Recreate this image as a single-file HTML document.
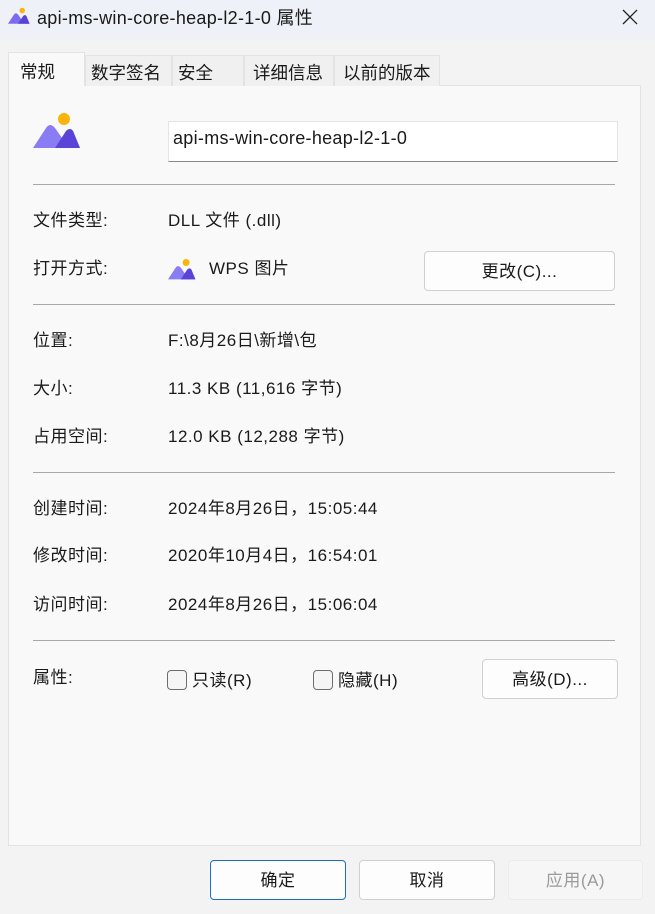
<!DOCTYPE html>
<html><head><meta charset="utf-8"><style>
*{margin:0;padding:0;box-sizing:border-box}
body{width:655px;height:914px;background:#f3f3f3;font-family:"Liberation Sans","Noto Sans CJK SC",sans-serif;font-size:17px;letter-spacing:0.5px;color:#1a1a1a;position:relative;overflow:hidden}
.a{position:absolute;white-space:nowrap;line-height:22px}
.title{position:absolute;left:0;top:0;width:655px;height:40px;background:#eef1f8}
.tab{position:absolute;top:55px;height:31px;background:#f0f0f0;border:1px solid #e3e3e3;border-bottom:none;font-size:17.5px;line-height:34px;padding-left:5px;letter-spacing:0}
.panel{position:absolute;left:8px;top:85px;width:633px;height:761px;background:#f9f9f9;border:1px solid #e3e3e3}
.hr{position:absolute;left:33px;width:582px;height:1px;background:#a8a8a8}
.btn{position:absolute;background:#fdfdfd;border:1px solid #d0d0d0;border-radius:4px;text-align:center;line-height:39px;font-size:17px}
.cb{position:absolute;width:20px;height:20px;border:1px solid #6d6d6d;border-radius:4px;background:#f5f5f5}
</style></head><body>
<div class="title"></div>
<svg class="a" style="left:8px;top:7px" width="22" height="18" viewBox="33 112 48 38"><circle cx="64" cy="119" r="6" fill="#fbb40b"/><path d="M33 148 L46 128 Q50 122 55 128 L62 138 L67 131 Q70 127 73 131 L80 148 Z" fill="#7a6cf0"/><path d="M55 148 L66 131 Q70 127 73 131 L80 148 Z" fill="#5a44d8"/></svg>
<div class="a" style="left:37px;top:7px;font-size:18px;letter-spacing:0.3px">api-ms-win-core-heap-l2-1-0 属性</div>
<svg class="a" style="left:622px;top:9px" width="16" height="16"><path d="M1 1L15 15M15 1L1 15" stroke="#222" stroke-width="1.3"/></svg>
<div class="panel"></div>
<div class="tab" style="left:85px;width:87px">数字签名</div>
<div class="tab" style="left:172px;width:72px">安全</div>
<div class="tab" style="left:244px;width:90px;padding-left:8px">详细信息</div>
<div class="tab" style="left:334px;width:106px;padding-left:8px">以前的版本</div>
<div class="tab" style="left:8px;top:52px;width:77px;height:34px;background:#f9f9f9;padding-left:11px;line-height:38px">常规</div>
<svg class="a" style="left:33px;top:112px" width="48" height="38" viewBox="33 112 48 38"><circle cx="64" cy="119" r="6" fill="#fbb40b"/><path d="M33 148 L46 128 Q50 122 55 128 L62 138 L67 131 Q70 127 73 131 L80 148 Z" fill="#8a7cf2"/><path d="M55 148 L66 131 Q70 127 73 131 L80 148 Z" fill="#5a44d8"/></svg>
<div style="position:absolute;left:168px;top:121px;width:450px;height:41px;background:#fff;border:1px solid #e5e5e5;border-bottom:1px solid #888"></div>
<div class="a" style="left:173px;top:127px;font-size:18px;letter-spacing:0.3px">api-ms-win-core-heap-l2-1-0</div>
<div class="hr" style="top:184px"></div>
<div class="a" style="left:33px;top:210px">文件类型:</div><div class="a" style="left:168px;top:210px">DLL 文件 (.dll)</div>
<div class="a" style="left:33px;top:258px">打开方式:</div>
<svg class="a" style="left:168px;top:258px" width="28" height="23" viewBox="33 112 48 38"><circle cx="64" cy="119" r="6" fill="#fbb40b"/><path d="M33 148 L46 128 Q50 122 55 128 L62 138 L67 131 Q70 127 73 131 L80 148 Z" fill="#8a7cf2"/><path d="M55 148 L66 131 Q70 127 73 131 L80 148 Z" fill="#5a44d8"/></svg>
<div class="a" style="left:209px;top:258px">WPS 图片</div>
<div class="btn" style="left:424px;top:251px;width:191px;height:40px">更改(C)...</div>
<div class="hr" style="top:304px"></div>
<div class="a" style="left:33px;top:330px">位置:</div><div class="a" style="left:168px;top:330px">F:\8月26日\新增\包</div>
<div class="a" style="left:33px;top:378px">大小:</div><div class="a" style="left:168px;top:378px">11.3 KB (11,616 字节)</div>
<div class="a" style="left:33px;top:426px">占用空间:</div><div class="a" style="left:168px;top:426px">12.0 KB (12,288 字节)</div>
<div class="hr" style="top:472px"></div>
<div class="a" style="left:33px;top:498px">创建时间:</div><div class="a" style="left:168px;top:498px">2024年8月26日，15:05:44</div>
<div class="a" style="left:33px;top:545px">修改时间:</div><div class="a" style="left:168px;top:545px">2020年10月4日，16:54:01</div>
<div class="a" style="left:33px;top:594px">访问时间:</div><div class="a" style="left:168px;top:594px">2024年8月26日，15:06:04</div>
<div class="hr" style="top:640px"></div>
<div class="a" style="left:33px;top:667px">属性:</div>
<div class="cb" style="left:167px;top:670px"></div><div class="a" style="left:192px;top:670px">只读(R)</div>
<div class="cb" style="left:313px;top:670px"></div><div class="a" style="left:338px;top:670px">隐藏(H)</div>
<div class="btn" style="left:482px;top:659px;width:136px;height:40px">高级(D)...</div>
<div class="btn" style="left:210px;top:860px;width:136px;height:40px;border-color:#1a6fc4">确定</div>
<div class="btn" style="left:359px;top:860px;width:136px;height:40px">取消</div>
<div class="btn" style="left:508px;top:860px;width:135px;height:40px;background:#f6f6f6;border-color:#ececec;color:#9a9a9a">应用(A)</div>
</body></html>
